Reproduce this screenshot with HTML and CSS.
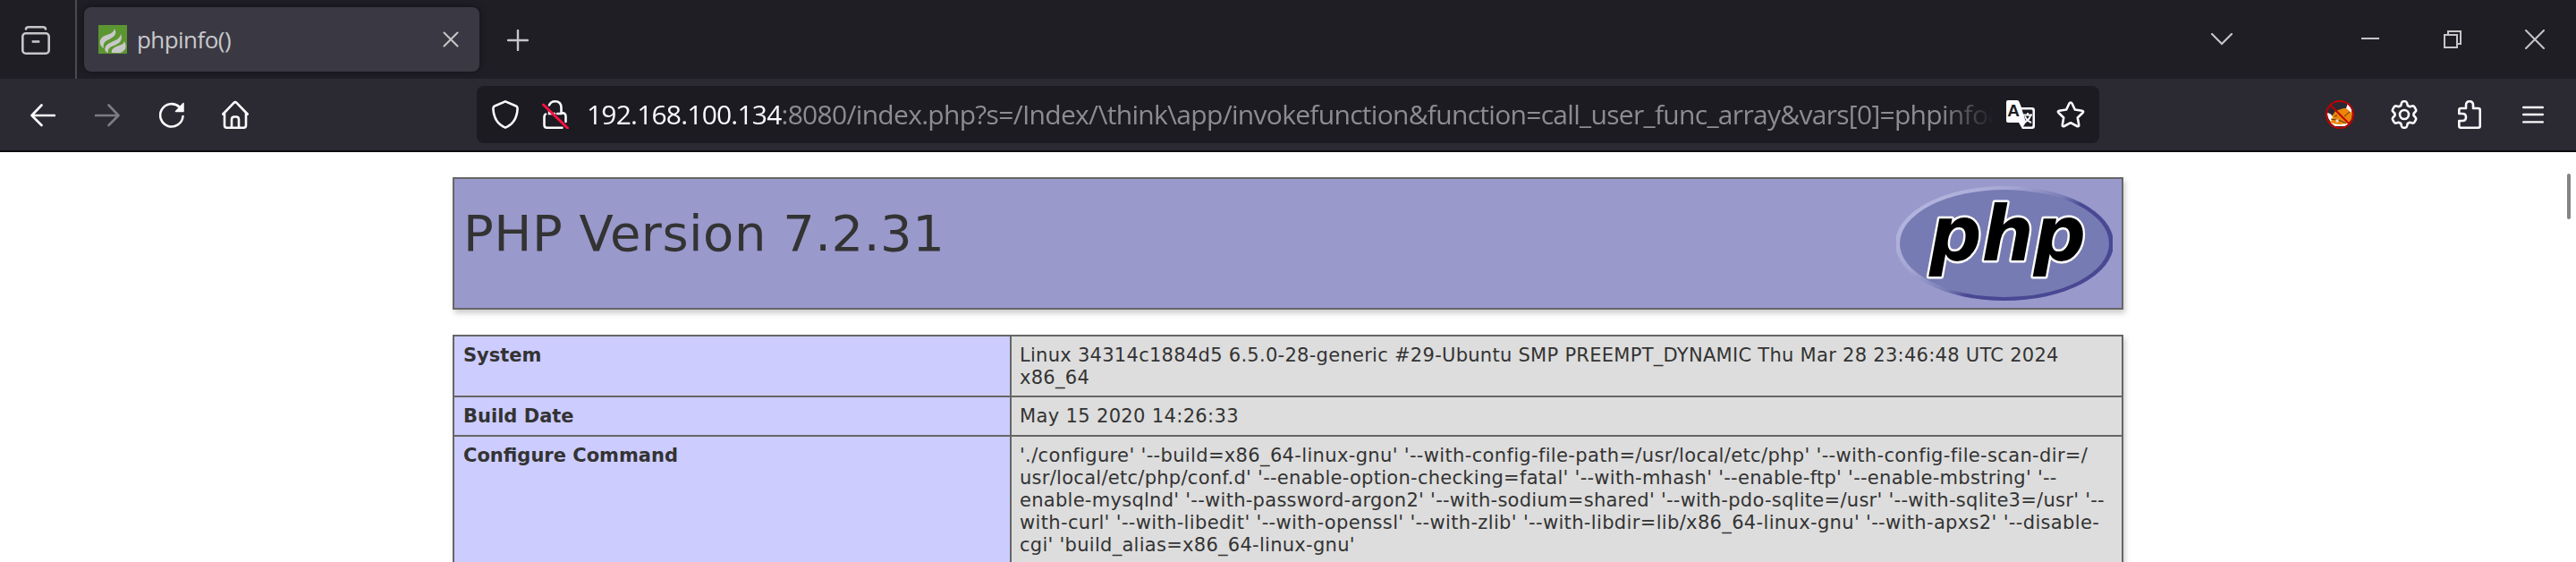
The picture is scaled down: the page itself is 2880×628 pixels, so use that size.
FILE: index.html
```html
<!DOCTYPE html>
<html lang="en">
<head>
<meta charset="utf-8">
<title>phpinfo()</title>
<link rel="stylesheet" href="styles.css">
</head>
<body>
<header class="tabbar">
  <div class="view">
    <svg width="32" height="32" viewBox="0 0 32 32" fill="none" stroke="#c6c6c9" stroke-width="2.6" stroke-linecap="round"><path d="M5 3.500Q5 1.300 8 1.300h16q3 0 3 2.200"/><rect x="1.3" y="8.3" width="29.4" height="22.4" rx="3.500"/><path d="M13 17.500h6" stroke-linecap="square"/></svg>
  </div>
  <div class="tab">
    <svg class="fav" width="32" height="32" viewBox="0 0 32 32"><rect width="32" height="32" fill="#5c9631"/><path d="M18 4c4 7-2 10-8 13-4 2-5 5-4 9-5-3-6-9-1-13C10 10 17 10 18 4zM25 10c3 7-2 11-8 13-5 2-7 4-6 8-5-1-5-7 0-10 6-4 13-4 14-11zM29 18c4 8 0 11-4 13h-10c-1-3 1-5 5-7 5-2 8-2 9-6z" fill="#c8c8c8"/></svg>
    <span class="tabname">phpinfo()</span>
    <svg width="18" height="18" viewBox="0 0 18 18" stroke="#c6c6c9" stroke-width="2" stroke-linecap="round"><path d="M1.5 1.5l15 15M16.5 1.5l-15 15"/></svg>
  </div>
  <svg class="plus" width="24" height="24" viewBox="0 0 24 24" stroke="#c6c6c9" stroke-width="2.4" stroke-linecap="round"><path d="M12 1v22M1 12h22"/></svg>
  <div class="winctl">
    <svg width="24" height="14" viewBox="0 0 24 14" fill="none" stroke="#c6c6c9" stroke-width="2.2" stroke-linecap="round"><path d="M1 1l11 11L23 1"/></svg>
    <svg class="min" width="20" height="20" viewBox="0 0 20 20"><path d="M0 8h20v2H0z" fill="#c6c6c9"/></svg>
    <svg class="max" width="20" height="20" viewBox="0 0 20 20" fill="none" stroke="#c6c6c9" stroke-width="2"><path d="M1 5h14v14H1zM5 5V1h14v14h-4"/></svg>
    <svg width="22" height="22" viewBox="0 0 22 22" stroke="#c6c6c9" stroke-width="2" stroke-linecap="round"><path d="M1 1l20 20M21 1L1 21"/></svg>
  </div>
</header>
<nav class="toolbar">
  <div class="nav">
    <svg width="28" height="28" viewBox="0 0 28 28" fill="none" stroke="#fbfbfe" stroke-width="2.6" stroke-linecap="round" stroke-linejoin="round"><path d="M27 15H1.5M12.5 3.500L1.500 15l11 11"/></svg>
    <svg width="28" height="28" viewBox="0 0 28 28" fill="none" stroke="#7c7b83" stroke-width="2.6" stroke-linecap="round" stroke-linejoin="round"><path d="M1 15h25.500M15.500 3.500L26.500 15l-11 11"/></svg>
    <svg width="28" height="30" viewBox="0 0 28 30" fill="none" stroke="#fbfbfe" stroke-width="2.6" stroke-linecap="round"><path d="M26.500 17A12.700 12.700 0 1 1 22.500 6.500"/><path d="M27 2.500v9h-8.500z" fill="#fbfbfe" stroke-width="1.500" stroke-linejoin="round"/></svg>
    <svg class="home" width="30" height="32" viewBox="0 0 30 32" fill="none" stroke="#fbfbfe" stroke-width="2.600" stroke-linecap="round" stroke-linejoin="round"><path d="M1.300 15.500L13.500 2.800q1.500-1.500 3 0L28.700 15.500M3 14v14q0 2.700 2.500 2.700h19q2.500 0 2.500-2.700V14M11 30v-8.500q0-3 3-3h2q3 0 3 3V30"/></svg>
  </div>
  <div class="urlbar">
    <svg width="30" height="32" viewBox="0 0 30 32" fill="none" stroke="#fbfbfe" stroke-width="2.600" stroke-linejoin="round"><path d="M15 1.400L27 6.500q1.700.8 1.600 3C28 20 24 27 15 30.600 6 27 2 20 1.400 9.500q-.1-2.200 1.600-3z"/></svg>
    <svg class="lock" width="30" height="32" viewBox="0 0 30 32" fill="none" stroke="#fbfbfe" stroke-width="2.600" stroke-linecap="round"><path d="M8 5.500q2-4.200 6.500-4.200 7 0 7 7.200v5.500q5 0 5 4v6M4 15.500q-1.500 1-1.500 3v9q0 3.200 3 3.200h17"/><path d="M8 12v3h6M17 15h5" stroke-width="2.400"/><path d="M1.500 5L28.500 31" stroke="#ff0f43" stroke-width="3"/></svg>
    <div class="url"><span class="host">192.168.100.134</span><span class="path">:8080/index.php?s=/Index/\think\app/invokefunction&amp;function=call_user_func_array&amp;vars[0]=phpinfo&amp;</span></div>
    <svg class="trans" width="32" height="32" viewBox="0 0 32 32"><path d="M2 0h10q2 0 2.600 2L17 8h12q3 0 3 3v18q0 3-3 3H18l-4-7H2q-2 0-2-2V2Q0 0 2 0z" fill="#fbfbfe"/><path d="M17.500 10.500H28q1.500 0 1.500 1.500v16q0 1.500-1.500 1.500h-9l3-5z" fill="#1c1b22"/><text x="8" y="18" class="tA">A</text><path d="M19 16.500h10M24 14v2.500M20 25q6-3 7-8M21 18q2 5 7 7" fill="none" stroke="#fbfbfe" stroke-width="2"/></svg>
    <svg width="32" height="32" viewBox="0 0 32 32" fill="none" stroke="#fbfbfe" stroke-width="2.600" stroke-linejoin="round"><path d="M16 2.500q1 0 1.500 1l3.300 7 8 1.200q2.300.5.700 2.300l-5.700 5.500 1.400 8q.2 2.400-2 1.500L16 25.200 8.800 29q-2.200.9-2-1.500l1.400-8L2.500 14q-1.600-1.800.7-2.300l8-1.200 3.300-7q.5-1 1.500-1z"/></svg>
  </div>
  <div class="tools">
    <svg width="32" height="32" viewBox="0 0 32 32"><path d="M2 15l5 3 4-6 9-3 5 0 5 5-1 7-5 7-10 1-8-3-2-6z" fill="#ec8509"/><path d="M2 14q5 1 6 5l-2 5Q2 20 2 14zM25 3q5 4 4 11l-6-5zM6 25q9 4 20 0l-4 4H10z" fill="#fff"/><path d="M6 21l11 2 6 3M21 18l6-5M10 18l3-1" stroke="#5a3208" fill="none"/><circle cx="13" cy="23" r="1.700" fill="#ddd"/><circle cx="16" cy="16" r="15" fill="none" stroke="#c00000" stroke-width="2"/><path d="M5.500 5.500l21 21" stroke="#c00000" stroke-width="2"/></svg>
    <svg width="32" height="32" viewBox="0 0 32 32" fill="none" stroke="#fbfbfe" stroke-width="2.600" stroke-linejoin="round"><path d="M13 3q.5-1.700 2-1.700h2q1.500 0 2 1.700l.8 3 2.200 1.200 3-.8q1.500-.3 2.300 1l1.600 2.800q.8 1.300-.3 2.500L26.500 15v2l2.100 2.300q1.100 1.200.3 2.500l-1.600 2.800q-.8 1.300-2.300 1l-3-.8-2.200 1.200-.8 3q-.5 1.700-2 1.700h-2q-1.500 0-2-1.700l-.8-3L10 24.800l-3 .8q-1.500.3-2.300-1l-1.600-2.800q-.8-1.300.3-2.500L5.500 17v-2l-2.100-2.300q-1.100-1.200-.3-2.500l1.600-2.800q.8-1.300 2.300-1l3 .8L12.200 6z"/><circle cx="16" cy="16" r="5"/></svg>
    <svg class="puz" width="26" height="32" viewBox="0 0 26 32" fill="none" stroke="#fbfbfe" stroke-width="2.600" stroke-linejoin="round"><path d="M1.300 15V11q0-2 2-2H9V5.500q0-4.200 4-4.200t4 4.200V9h5.700q2 0 2 2v17.700q0 2-2 2H3.300q-2 0-2-2V23H5q4 0 4-4t-4-4z"/></svg>
    <svg width="24" height="20" viewBox="0 0 24 20" stroke="#fbfbfe" stroke-width="2.400" stroke-linecap="round"><path d="M1.200 2h21.600M1.200 10h21.600M1.200 18.400h21.600"/></svg>
  </div>
</nav>
<main class="page">
  <section class="banner">
    <h1>PHP Version 7.2.31</h1>
    <svg class="logo" width="242" height="128" viewBox="0 0 242 128"><defs><linearGradient id="rim" gradientUnits="userSpaceOnUse" x1="70" y1="0" x2="172" y2="128"><stop offset="0" stop-color="#b2b3dc"/><stop offset=".25" stop-color="#a3a4d2"/><stop offset=".5" stop-color="#7a7db5"/><stop offset=".62" stop-color="#484893"/><stop offset="1" stop-color="#484893"/></linearGradient></defs><ellipse cx="121" cy="64" rx="122" ry="64" fill="url(#rim)"/><ellipse cx="121" cy="64" rx="117" ry="60" fill="#777bb3"/><text x="37" y="82.500" textLength="175" lengthAdjust="spacingAndGlyphs" class="mark">php</text></svg>
  </section>
  <table class="info">
    <tr class="r1"><th>System</th><td>Linux 34314c1884d5 6.5.0-28-generic #29-Ubuntu SMP PREEMPT_DYNAMIC Thu Mar 28 23:46:48 UTC 2024<br>x86_64</td></tr>
    <tr class="r2"><th>Build Date</th><td class="wide">May 15 2020 14:26:33</td></tr>
    <tr><th>Configure Command</th><td><span class="wide">'./configure' '--build=x86_64-linux-gnu' '--with-config-file-path=/usr/local/etc/php' '--with-config-file-scan-dir=/</span><br>usr/local/etc/php/conf.d' '--enable-option-checking=fatal' '--with-mhash' '--enable-ftp' '--enable-mbstring' '--<br>enable-mysqlnd' '--with-password-argon2' '--with-sodium=shared' '--with-pdo-sqlite=/usr' '--with-sqlite3=/usr' '--<br><span class="wide">with-curl' '--with-libedit' '--with-openssl' '--with-zlib' '--with-libdir=lib/x86_64-linux-gnu' '--with-apxs2' '--disable-</span><br>cgi' 'build_alias=x86_64-linux-gnu'</td></tr>
  </table>
  <div class="thumb"></div>
</main>
</body>
</html>
```
FILE: styles.css
```css
* { box-sizing: border-box; }
body { margin: 0; height: 628px; overflow: hidden; background: #fff; color: #333; font-family: "Open Sans", "Noto Sans", sans-serif; }
svg { display: block; flex: none; }
.tabbar { height: 88px; background: #1f1e25; display: flex; align-items: center; }
.view { width: 86px; height: 88px; border-right: 2px solid #4b4a51; padding: 29px 0 0 24px; }
.tab { width: 442px; height: 72px; margin-left: 8px; border-radius: 8px; background: #3a3943; box-shadow: 0 0 6px #121117; display: flex; align-items: center; padding: 0 23px 0 16px; }
.tabname { flex: 1; margin-left: 11px; font-size: 26px; letter-spacing: -.55px; line-height: 36px; color: #c9c9cc; }
.plus { margin-left: 31px; margin-top: 2px; }
.winctl { display: flex; align-items: center; margin-left: auto; padding-right: 35px; }
.min { margin-left: 144px; }
.max { margin: 0 71px 0 72px; }
.toolbar { height: 82px; background: #2b2a33; border-bottom: 2px solid #0c0c0d; display: flex; align-items: center; }
.nav { width: 533px; padding-left: 34px; display: flex; align-items: center; gap: 44px; }
.home { margin-left: -2px; }
.urlbar { width: 1814px; height: 64px; border-radius: 8px; background: #1c1b22; display: flex; align-items: center; padding: 0 16px 0 17px; }
.lock { margin-left: 26px; }
.url { flex: 1; margin-left: 20px; margin-right: 14px; overflow: hidden; white-space: nowrap; font-size: 30px; line-height: 44px; letter-spacing: -.8px; mask-image: linear-gradient(to right, #000 calc(100% - 60px), transparent); }
.host { color: #fbfbfe; }
.path { color: #8d8c91; letter-spacing: -.7px; }
.trans { margin-right: 24px; }
.tA { font: bold 19px "Liberation Sans", sans-serif; text-anchor: middle; fill: #1c1b22; }
.tools { margin-left: auto; display: flex; align-items: center; padding-right: 36px; }
.tools svg + svg { margin-left: 40px; }
.tools .puz { margin-left: 44px; }
.tools .puz + svg { margin-left: 46px; }
.page { height: 458px; position: relative; padding: 28px 506px 0; overflow: hidden; font-family: "DejaVu Sans", Verdana, sans-serif; }
.banner { height: 148px; border: 2px solid #666; background: #99c; box-shadow: 2px 4px 6px #ccc; display: flex; justify-content: space-between; align-items: flex-start; padding: 8px 10px; }
h1 { margin: 20px 0 0; font-size: 56px; font-weight: 400; line-height: 66px; letter-spacing: .5px; }
.mark { font: italic bold 86px "DejaVu Sans", sans-serif; fill: #000; stroke: #fff; stroke-width: 5px; stroke-linejoin: round; paint-order: stroke; }
.info { width: 1868px; margin-top: 28px; border-collapse: collapse; table-layout: fixed; box-shadow: 2px 4px 6px #ccc; font-size: 21px; line-height: 25px; }
.info th, .info td { border: 2px solid #666; padding: 9px 9px 6px; vertical-align: top; text-align: left; white-space: nowrap; }
.r1 { height: 68px; }
.r2 { height: 44px; }
.info th { width: 623px; padding-left: 10px; background: #ccf; }
.info td { background: #ddd; letter-spacing: .28px; }
.info .wide { letter-spacing: .35px; }
.thumb { position: absolute; right: 6px; top: 24px; width: 4px; height: 51px; border-radius: 2px; background: #858585; }
```
